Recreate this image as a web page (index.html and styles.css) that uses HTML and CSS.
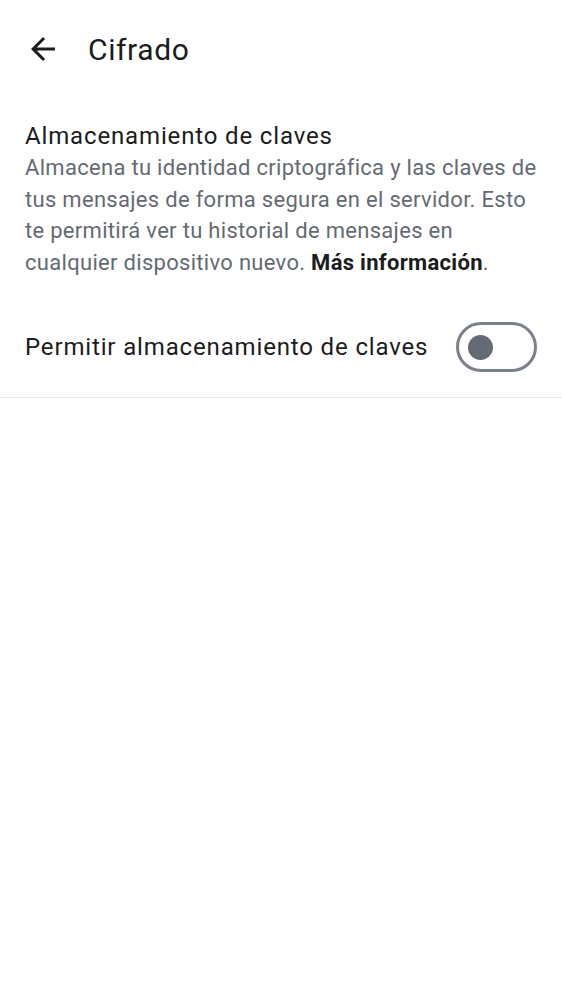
FILE: index.html
```html
<!DOCTYPE html>
<html lang="es">
<head>
<meta charset="utf-8">
<link rel="stylesheet" href="styles.css">
</head>
<body>
<header class="topbar">
  <svg class="back" viewBox="0 0 24 24" width="36" height="36" aria-hidden="true">
    <path d="M20 11H7.83l5.59-5.59L12 4l-8 8 8 8 1.41-1.41L7.83 13H20v-2z" fill="currentColor"/>
  </svg>
  <h1 class="title">Cifrado</h1>
</header>
<section class="section">
  <h2 class="section-title">Almacenamiento de claves</h2>
  <p class="section-desc">Almacena tu identidad criptográfica y las claves de tus mensajes de forma segura en el servidor. Esto te permitirá ver tu historial de mensajes en cualquier dispositivo nuevo. <b class="link">Más información</b>.</p>
  <div class="row">
    <span class="row-label">Permitir almacenamiento de claves</span>
    <span class="switch"><span class="knob"></span></span>
  </div>
</section>
</body>
</html>
```
FILE: styles.css
```css
html, body {
  margin: 0;
  padding: 0;
  background: #ffffff;
  font-family: Roboto, "Noto Sans", sans-serif;
  color: #1b1c20;
}
.topbar {
  height: 98px;
  display: flex;
  align-items: center;
  padding-left: 25px;
  gap: 27px;
}
.back {
  color: #1b1c20;
  flex: none;
}
.title {
  margin: 0;
  font-size: 30px;
  font-weight: 400;
  letter-spacing: 0.6px;
}
.section {
  padding: 22px 25px 0 25px;
  border-bottom: 1px solid #e8e9ec;
}
.section-title {
  margin: 0;
  font-size: 24px;
  font-weight: 400;
  line-height: 32px;
  letter-spacing: 0.85px;
}
.section-desc {
  margin: 0;
  font-size: 22px;
  line-height: 31.5px;
  letter-spacing: 0.3px;
  color: #646a73;
}
.link {
  font-weight: 700;
  color: #1b1c20;
}
.row {
  display: flex;
  align-items: center;
  justify-content: space-between;
  padding: 44px 0 25px 0;
}
.row-label {
  font-size: 24px;
  letter-spacing: 0.85px;
}
.switch {
  box-sizing: border-box;
  width: 81px;
  height: 50px;
  border: 3px solid #7b818a;
  border-radius: 25px;
  display: flex;
  align-items: center;
  padding-left: 9px;
}
.knob {
  width: 25px;
  height: 25px;
  border-radius: 50%;
  background: #656b74;
}
```
